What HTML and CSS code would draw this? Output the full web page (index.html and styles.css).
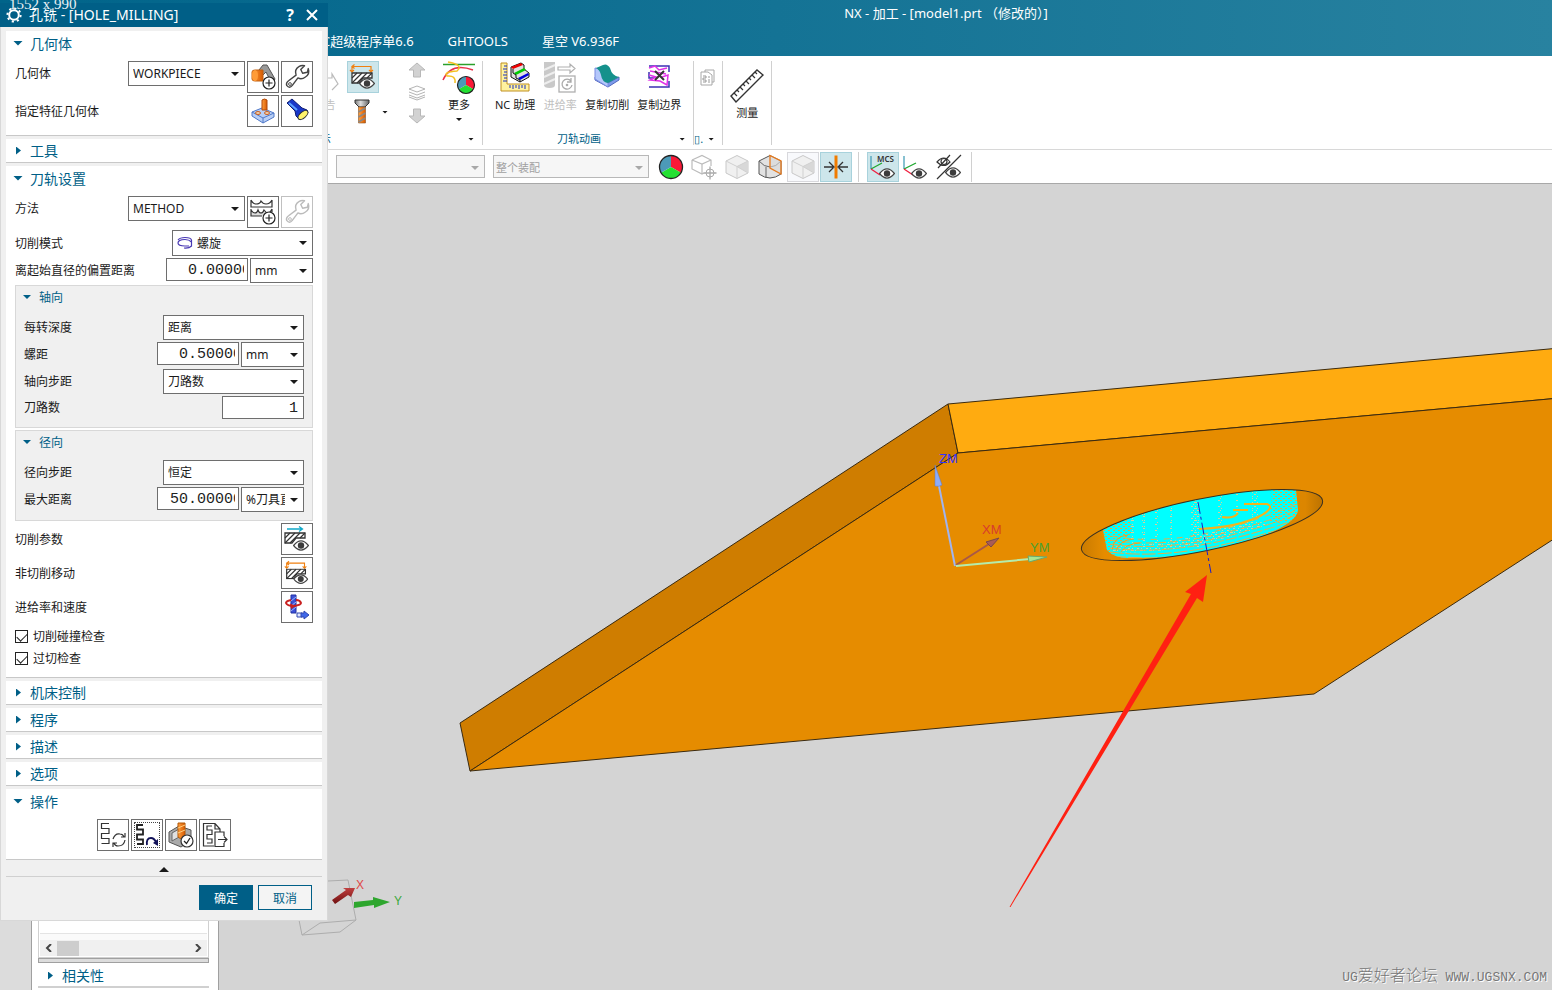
FILE: index.html
```html
<!DOCTYPE html>
<html lang="zh-CN">
<head>
<meta charset="UTF-8">
<title>NX - 加工</title>
<link rel="stylesheet" href="styles.css">
</head>
<body>

<!-- shared icon parts -->
<svg class="sprite" aria-hidden="true">
  <defs>
    <linearGradient id="steel" x1="0" x2="1"><stop offset="0" stop-color="#777"/><stop offset=".4" stop-color="#ddd"/><stop offset="1" stop-color="#666"/></linearGradient>
    <linearGradient id="orange" x1="0" x2="1"><stop offset="0" stop-color="#ffa040"/><stop offset="1" stop-color="#d85a00"/></linearGradient>
  </defs>
  <symbol id="eye" viewBox="0 0 16 11">
    <path d="M.6 5.500Q8-3.600 15.400 5.500Q8 14.600.6 5.500Z" fill="#fff" stroke="#444" stroke-width="1.200"/>
    <circle cx="8" cy="5.500" r="3.200" fill="#3c3c3c"/>
  </symbol>
  <symbol id="wrench" viewBox="0 0 32 32">
    <path d="M5 25Q4 22 7 20L15 14Q13 8 18 5Q21 3 24 4L20 8L22 12L27 11L28 7Q30 13 25 16Q21 19 17 17L11 25Q8 29 5 25Z" fill="none" stroke="currentColor" stroke-width="1.500" stroke-linejoin="round"/>
    <circle cx="8.500" cy="23.500" r="1.500" fill="none" stroke="currentColor"/>
  </symbol>
  <symbol id="plus" viewBox="0 0 14 14">
    <circle cx="7" cy="7" r="6" fill="#fff" stroke="#222" stroke-width="1.200"/>
    <path d="M3.500 7H10.500M7 3.500V10.500" stroke="#222" stroke-width="1.200"/>
  </symbol>
  <symbol id="cube" viewBox="0 0 26 26">
    <path d="M2 7L13 1.500L24 7V19L13 24.500L2 19Z" fill="#f0f0f0" stroke="#c8c8c8"/>
    <path d="M13 12.500L24 7V19L13 12.500Z" fill="#d8d8d8"/>
    <path d="M2 7L13 12.500L24 7M13 12.500V24.500M13 12.500L24 19" fill="none" stroke="#d0d0d0"/>
  </symbol>
  <symbol id="block" viewBox="0 0 22 12">
    <path d="M1 1H21V6H12L8 11H1Z" fill="#fff" stroke="#333" stroke-width="1.300"/>
    <path d="M1 6L6 1M1 11L11 1M6 11L16 1M16 6L21 1" stroke="#333" stroke-width="1.200"/>
  </symbol>
  <symbol id="noncut" viewBox="0 0 32 32">
    <path d="M5 11V5.500H24V11M7.500 3.500L5 5.500L7.500 7.500M3 9L5 11L7 9M22 9L24 11L26 9" fill="none" stroke="#f08010" stroke-width="1.200"/>
    <use href="#block" x="4" y="11" width="22" height="12"/>
    <use href="#eye" x="12" y="17" width="16" height="11"/>
  </symbol>
</svg>

<div class="app">
  <header class="app-header">
    <div class="app-title">NX - 加工 - [model1.prt （修改的）]</div>
    <nav class="tabs">
      <a href="#">C超级程序单6.6</a>
      <a href="#">GHTOOLS</a>
      <a href="#">星空 V6.936F</a>
    </nav>
  </header>

  <div class="ribbon">
    <section class="ribbon-group group-display">
      <div class="ribbon-items">
        <div class="report-tools">
          <button class="tool off report">
            <svg width="20" height="34" viewBox="0 0 20 34"><path d="M6 17H12V13L18 23L12 29" fill="none" stroke="#bbb" stroke-width="1.200"/></svg>
            <span>告</span>
          </button>
          <div class="stack">
            <button class="square active" aria-label="显示刀轨"><svg width="32" height="32"><use href="#noncut"/></svg></button>
            <div class="screw-row">
              <button class="square-plain" aria-label="刀具"><svg width="16" height="26" viewBox="0 0 16 26"><path d="M1 1H15V4L11 8H5L1 4Z" fill="url(#steel)" stroke="#333"/><path d="M4.500 8H11.500V24H4.500Z" fill="url(#orange)" stroke="#8a5020" stroke-width=".6"/><path d="M4.500 13L11.500 9M4.500 18L11.500 14M4.500 23L11.500 19" stroke="#888" stroke-width="1.500"/></svg></button>
              <i class="caret small"></i>
            </div>
          </div>
        </div>
        <div class="stack arrows">
          <svg width="18" height="16" viewBox="0 0 18 16"><path d="M9 1L17 8H12.500V15H5.500V8H1Z" fill="#d2d2d2" stroke="#b8b8b8"/></svg>
          <svg width="18" height="16" viewBox="0 0 18 16"><path d="M1 4L9 1L17 4L9 7ZM1 7L9 10L17 7M1 10L9 13L17 10M1 12L9 15L17 12" fill="none" stroke="#b4b4b4"/></svg>
          <svg width="18" height="16" viewBox="0 0 18 16"><path d="M9 15L17 8H12.500V1H5.500V8H1Z" fill="#d2d2d2" stroke="#b8b8b8"/></svg>
        </div>
        <button class="tool more">
          <svg width="34" height="34" viewBox="0 0 34 34"><path d="M1 3.500H33" stroke="#2ba02b" stroke-width="1.500"/><path d="M1 19Q9 1 31 9" fill="none" stroke="#e8304a" stroke-width="1.500"/><path d="M6 1Q22 4 15 10Q1 11 5 15Q14 14 13 22" fill="none" stroke="#f5c020" stroke-width="1.500"/><path d="M24 24V15.500A8.500 8.500 0 0 1 31.400 28.200Z" fill="#fa1837"/><path d="M24 24L31.400 28.200A8.500 8.500 0 0 1 16.600 28.200Z" fill="#23e032"/><path d="M24 24L16.600 28.200A8.500 8.500 0 0 1 24 15.500Z" fill="#4c9ab8"/><circle cx="24" cy="24" r="8.500" fill="none" stroke="#222" stroke-width="1.200"/></svg>
          <span>更多</span>
          <i class="caret small"></i>
        </button>
      </div>
      <div class="ribbon-label"><span>示</span><i class="caret small"></i></div>
    </section>

    <section class="ribbon-group group-path">
      <div class="ribbon-items">
        <button class="tool">
          <svg width="32" height="34" viewBox="0 0 32 34"><path d="M2 2H8V23H30V30H2Z" fill="#fff2a0" stroke="#c09020"/><path d="M5 5H8M4 8H8M5 11H8M4 14H8M5 17H8M4 20H8M11 24V27M14 24V28M17 24V27M20 24V28M23 24V27M26 24V28" stroke="#1a30c0"/><path d="M12 6L22 2L25 4V8L30 12V16L21 21L12 16Z" fill="#e0e0e0" stroke="#111"/><path d="M12 6L22 2L24 4L14 8Z" fill="#e00"/><path d="M15 12L25 7L27 9L17 14Z" fill="#0c0"/><path d="M19 17L29 12L30 14L21 19Z" fill="#00d"/><path d="M14 8V12L17 14V17L21 19V21" fill="none" stroke="#111"/></svg>
          <span>NC 助理</span>
        </button>
        <button class="tool off">
          <svg width="34" height="34" viewBox="0 0 34 34"><path d="M1 1H12V24Q12 27 6.500 27Q1 27 1 24Z" fill="#c9c9c9"/><path d="M1 9L12 4M1 16L12 11M1 23L12 18" stroke="#eee" stroke-width="2"/><path d="M15 6H27V3L32 7.500L27 12V9H15Z" fill="none" stroke="#b0b0b0" stroke-width="1.200"/><rect x="16" y="15" width="16" height="16" fill="none" stroke="#b0b0b0" stroke-width="1.300"/><path d="M28 20A5 5 0 1 0 29 24M28 17V21H24" fill="none" stroke="#aaa" stroke-width="1.300"/><circle cx="24" cy="24" r="1.300" fill="#aaa"/></svg>
          <span>进给率</span>
        </button>
        <button class="tool">
          <svg width="26" height="34" viewBox="0 0 26 34"><path d="M1 16L14 22L25 16V19L14 26L1 19Z" fill="#7c9bea" stroke="#5368c0"/><path d="M1 7Q6 7 8 14Q9 20 14 22V26L1 18Z" fill="#b4c7fb" stroke="#7a8ce0"/><path d="M9 4Q13 2 16 7Q18 15 25 16L14 22Q8 21 7 14Q6 9 2 7Z" fill="#15918c"/></svg>
          <span>复制切削</span>
        </button>
        <button class="tool">
          <svg width="26" height="34" viewBox="0 0 26 34"><path d="M3 5H23V11M3 11V17H8M3 26H23V20" fill="none" stroke="#3c30b4" stroke-width="1.500"/><path d="M3 7L9 5L13 9L21 7M4 10L20 13M3 14L10 16L4 19L14 20L21 24L22 14L16 16" fill="none" stroke="#e030e8" stroke-width="1.500"/><path d="M9 10L18 19M18 10L9 19" stroke="#333" stroke-width="2"/></svg>
          <span>复制边界</span>
        </button>
      </div>
      <div class="ribbon-label"><span>刀轨动画</span><i class="caret small"></i></div>
    </section>

    <section class="ribbon-group group-post">
      <div class="ribbon-items">
        <svg width="16" height="18" viewBox="0 0 16 18"><path d="M5 3V1H14V13H12M1 3H8L12 6V16H1Z" fill="#fff" stroke="#a8a8a8"/><path d="M3 7H6V9H3V11H6V13H3M8 8H10M8 11H10M8 13H10" fill="none" stroke="#999"/></svg>
      </div>
      <div class="ribbon-label"><span>▯.</span><i class="caret small"></i></div>
    </section>

    <section class="ribbon-group group-measure">
      <div class="ribbon-items">
        <button class="tool">
          <svg width="34" height="34" viewBox="0 0 34 34"><path d="M1 27L27 1L33 6L6 33Z" fill="#fff" stroke="#333" stroke-width="1.400"/><path d="M4 24L7 27M7 21L9 23M10 18L13 21M13 15L15 17M16 12L19 15M19 9L21 11M22 6L25 9M25 3L27 5" stroke="#333" stroke-width="1.200"/></svg>
          <span>测量</span>
        </button>
      </div>
    </section>
  </div>

  <div class="selection-bar">
    <div class="combo off filter"><select disabled aria-label="过滤器"><option></option></select></div>
    <div class="combo off assembly"><select disabled aria-label="选择范围"><option>整个装配</option></select></div>
    <div class="view-tools">
      <button class="view-tool" aria-label="颜色"><svg width="26" height="26" viewBox="0 0 26 26"><path d="M13 13V1.500A11.500 11.500 0 0 1 23 18.700Z" fill="#fa1837"/><path d="M13 13L23 18.700A11.500 11.500 0 0 1 3 18.700Z" fill="#23e032"/><path d="M13 13L3 18.700A11.500 11.500 0 0 1 13 1.500Z" fill="#4c9ab8"/><circle cx="13" cy="13" r="11.500" fill="none" stroke="#222" stroke-width="1.300"/></svg></button>
      <button class="view-tool" aria-label="定向"><svg width="26" height="26" viewBox="0 0 26 26"><path d="M1 6L11 1.500L20 6V12M1 6V15L11 20L13 19M1 6L11 10L20 6M11 10V20" fill="none" stroke="#bbb" stroke-width="1.200"/><circle cx="19" cy="19" r="4" fill="#fff" stroke="#aaa"/><path d="M12.500 19H25.500M19 12.500V25.500" stroke="#aaa" stroke-width="1.300"/></svg></button>
      <button class="view-tool" aria-label="着色"><svg width="26" height="26"><use href="#cube"/></svg></button>
      <button class="view-tool" aria-label="剖切"><svg width="26" height="26" viewBox="0 0 26 26"><path d="M2 7L13 1.500L24 7V20Q13 28 2 20Z" fill="#e2e2e2" stroke="#555"/><path d="M2 7Q7 13 13 13Q19 13 24 7M9 13V24" fill="none" stroke="#666"/><path d="M13 1.500L24 7V20L13 14Z" fill="#d8d8d8" fill-opacity=".6" stroke="#e87a1c" stroke-width="1.300"/></svg></button>
      <button class="view-tool boxed" aria-label="透视"><svg width="26" height="26"><use href="#cube"/></svg></button>
      <button class="view-tool active" aria-label="对齐"><svg width="26" height="26" viewBox="0 0 26 26"><path d="M13 1.500V24.500" stroke="#f07c00" stroke-width="3"/><path d="M1 13H10M6 8L11 13L6 18M25 13H16M20 8L15 13L20 18" fill="none" stroke="#333" stroke-width="1.300"/></svg></button>
    </div>
    <div class="view-tools coords">
      <button class="view-tool active" aria-label="显示 MCS"><svg width="28" height="28" viewBox="0 0 28 28"><path d="M2 3V16" stroke="#48a0b8" stroke-width="1.300"/><path d="M2 16L13 10" stroke="#20a830" stroke-width="1.300"/><path d="M2 16L11 22" stroke="#f02040" stroke-width="1.300"/><text x="8" y="9" class="mcs">MCS</text><use href="#eye" x="10" y="15" width="16" height="11"/></svg></button>
      <button class="view-tool" aria-label="显示 WCS"><svg width="28" height="28" viewBox="0 0 28 28"><path d="M2 3V16" stroke="#48a0b8" stroke-width="1.300"/><path d="M2 16L14 10" stroke="#20a830" stroke-width="1.300"/><path d="M2 16L11 22" stroke="#f02040" stroke-width="1.300"/><use href="#eye" x="9" y="15" width="16" height="11"/></svg></button>
      <button class="view-tool" aria-label="显示和隐藏"><svg width="28" height="28" viewBox="0 0 28 28"><path d="M2 9Q9 1 15 9Q9 16 2 9Z" fill="none" stroke="#333" stroke-width="1.200"/><circle cx="9" cy="8.500" r="3" fill="none" stroke="#333" stroke-width="1.200"/><path d="M3 15L15 2M2 26L26 2" stroke="#333" stroke-width="1.200"/><use href="#eye" x="10" y="14" width="16" height="11"/></svg></button>
    </div>
  </div>

  <main class="workspace">
    <aside class="navigator">
      <div class="nav-pane">
        <div class="nav-list">
          <div class="nav-scroll">
            <button aria-label="向左"><svg width="7" height="8" viewBox="0 0 7 8"><path d="M6 0L2 4L6 8" fill="none" stroke="#444" stroke-width="2"/></svg></button>
            <div class="thumb"></div>
            <button class="right" aria-label="向右"><svg width="7" height="8" viewBox="0 0 7 8"><path d="M1 0L5 4L1 8" fill="none" stroke="#444" stroke-width="2"/></svg></button>
          </div>
        </div>
        <div class="splitter"></div>
        <button class="panel-head">相关性</button>
      </div>
    </aside>

    <div class="viewport">
      <svg class="scene" viewBox="219 184 1333 806" preserveAspectRatio="xMidYMid slice">
        <defs>
          <clipPath id="hole"><ellipse cx="1202" cy="525" rx="123" ry="26" transform="rotate(-11.600 1202 525)"/></clipPath>
          <clipPath id="path-area"><path d="M1103 480V530L1107 550Q1114 558 1128 558Q1210 559 1270 533Q1297 521 1298 510L1295 480Z"/></clipPath>
          <linearGradient id="wall" x1="0" x2="1"><stop offset="0" stop-color="#c87a00"/><stop offset=".1" stop-color="#e68c00"/><stop offset=".92" stop-color="#dc8600"/><stop offset="1" stop-color="#b87000"/></linearGradient>
          <linearGradient id="red-axis" x1="0" y1="0" x2="0" y2="1"><stop offset="0" stop-color="#c04040"/><stop offset="1" stop-color="#701010"/></linearGradient>
          <pattern id="specks" width="9" height="6" patternUnits="userSpaceOnUse"><path d="M0 .5H2M5 .5H6M3 2.500H5M7 2.500H8M1 4.500H2M6 4.500H9" stroke="#d8cf98" stroke-width="1"/></pattern>
          <pattern id="grain" width="5" height="4" patternUnits="userSpaceOnUse"><path d="M0 .5H2M3 2.500H5" stroke="#e8a838" stroke-width="1"/></pattern>
        </defs>

        <!-- plate -->
        <g stroke="#3a2a10" stroke-width="1" stroke-linejoin="round">
          <path d="M948 404L958 453L470 771L460 723Z" fill="#cf7d00"/>
          <path d="M948 404L1560 348V398L958 453Z" fill="#ffab10"/>
          <path d="M958 453L1560 398V535L1314 694L470 771Z" fill="#e68c00"/>
        </g>

        <!-- hole with tool path -->
        <g clip-path="url(#hole)">
          <rect x="1080" y="485" width="245" height="80" fill="url(#wall)"/>
          <g clip-path="url(#path-area)">
            <rect x="1100" y="485" width="200" height="80" fill="#00ffff"/>
            <path d="M1103 526L1128 516L1134 532L1112 558H1103ZM1272 485H1300V520L1270 524Z" fill="url(#grain)"/>
            <path d="M1131 512H1134V545H1131ZM1142 512H1145V548H1142ZM1155 507H1158V547H1155ZM1170 504H1173V547H1170ZM1191 498H1199V548H1191ZM1218 492H1222V530H1218ZM1235 490H1238V515H1235ZM1252 488H1258V520H1252ZM1110 546Q1170 548 1250 520L1270 524Q1180 556 1112 552Z" fill="url(#specks)"/>
            <g fill="none" stroke="#e6ae48" stroke-width="1">
              <path d="M1112 536Q1170 547 1245 523T1296 496" stroke-dasharray="6 7"/>
              <path d="M1110 540Q1170 550 1250 526T1298 500" stroke-dasharray="8 4"/>
              <path d="M1110 544Q1170 553 1250 530T1298 504" stroke-dasharray="9 3"/>
              <path d="M1110 548Q1170 556 1250 534T1298 508" stroke-dasharray="11 2"/>
              <path d="M1110 552Q1170 560 1250 538T1298 512" stroke-dasharray="14 2"/>
              <path d="M1112 556Q1180 563 1250 542T1298 516" stroke-dasharray="14 2"/>
              <path d="M1112 550Q1114 536 1128 535M1116 551Q1119 540 1134 539M1121 552Q1125 544 1140 543" stroke="#f0a020"/>
            </g>
            <g fill="none" stroke="#f2b41c" stroke-width="2">
              <path d="M1199 529Q1240 527 1262 515Q1275 507 1267 504H1244M1222 517Q1234 519 1238 513M1233 510H1248"/>
            </g>
          </g>
        </g>
        <ellipse cx="1202" cy="525" rx="123" ry="26" transform="rotate(-11.600 1202 525)" fill="none" stroke="#3a3020"/>
        <path d="M1198 502L1211 573" stroke="#1c1cc8" stroke-width="1" stroke-dasharray="12 3 3 3"/>

        <!-- machine coordinate system -->
        <path d="M955 566L939 486" stroke="#a0b4f0" stroke-width="2"/>
        <path d="M935 465L942 485Q939 487 935 486Z" fill="#8cacf8" stroke="#6078c0" stroke-width=".5"/>
        <path d="M956 565L989 544" stroke="#a85848" stroke-width="2"/>
        <path d="M999 538L991 547L986 542Z" fill="#a85c58" stroke="#7c4848"/>
        <path d="M956 566L1030 559" stroke="#b4ecac" stroke-width="2"/>
        <path d="M1047 557L1029 562L1028 556Z" fill="#a8e490" stroke="#68a870"/>
        <g class="axis-text">
          <text x="939" y="463" fill="#3232ff">ZM</text>
          <text x="982" y="534" fill="#d83c2c">XM</text>
          <text x="1030" y="552" fill="#4ca030">YM</text>
        </g>

        <!-- pointer to the tool path -->
        <path d="M1009.500 907L1191 594L1185 592L1207 575L1203 602L1197 598L1010.500 907Z" fill="#ff2012"/>

        <!-- view triad -->
        <path d="M298 915L302 935L340 932L356 920L348 880L328 881M302 935L320 923L356 920" fill="none" stroke="#adadad"/>
        <path d="M332 900L346 890L343 888L355 888L351 897L348 895L335 904Z" fill="url(#red-axis)"/>
        <path d="M354 902L373 900V897L390 902L374 908V905L354 908Z" fill="#2ea62e"/>
        <g class="triad-text">
          <text x="356" y="889" fill="#e04848">X</text>
          <text x="394" y="905" fill="#3ca83c">Y</text>
        </g>
      </svg>
      <div class="watermark">UG<b>爱好者论坛</b> WWW.UGSNX.COM</div>
    </div>
  </main>
</div>

<!-- operation dialog floats over the main window -->
<form class="dialog">
  <div class="dialog-title">
    <svg width="16" height="16" viewBox="0 0 16 16"><circle cx="8" cy="8" r="4.800" fill="none" stroke="#fff" stroke-width="2"/><circle cx="8" cy="8" r="6.600" fill="none" stroke="#fff" stroke-width="2" stroke-dasharray="2.200 2.980"/></svg>
    <h1>孔铣 - [HOLE_MILLING]</h1>
    <button type="button" class="help" aria-label="帮助">?</button>
    <button type="button" aria-label="关闭"><svg width="12" height="12" viewBox="0 0 12 12"><path d="M1 1L11 11M11 1L1 11" stroke="#fff" stroke-width="2"/></svg></button>
  </div>

  <div class="dialog-body">
    <section class="panel">
      <button type="button" class="panel-head open">几何体</button>
      <div class="rows">
        <div class="row top">
          <label for="geometry">几何体</label>
          <div class="combo medium"><select id="geometry"><option>WORKPIECE</option></select></div>
          <button type="button" class="icon-btn" aria-label="新建几何体"><svg width="30" height="30" viewBox="0 0 30 30"><path d="M11 8L15 3H19L27 17L24 22L18 10L14 14Z" fill="#999" stroke="#555"/><path d="M4 10Q4 8 7 8H15V19H7Q4 19 4 17Z" fill="url(#orange)" stroke="#c06010"/><ellipse cx="7" cy="13.500" rx="3" ry="5.500" fill="#ff9c38"/><use href="#plus" x="14" y="14" width="14" height="14"/></svg></button>
          <button type="button" class="icon-btn" aria-label="编辑几何体"><svg width="30" height="30"><use href="#wrench"/></svg></button>
        </div>
        <div class="row">
          <label for="feature">指定特征几何体</label>
          <button type="button" id="feature" class="icon-btn" aria-label="指定特征几何体"><svg width="30" height="30" viewBox="0 0 30 30"><path d="M4 16L14 12L26 17V21L15 27L4 20Z" fill="#b8cff6" stroke="#5078c8"/><path d="M4 16L15 22L26 17M15 22V27" fill="none" stroke="#5078c8"/><ellipse cx="10" cy="17" rx="2.500" ry="1.500" fill="#f0d0b0" stroke="#c86020"/><ellipse cx="19" cy="17" rx="2.500" ry="1.500" fill="#f0d0b0" stroke="#c86020"/><path d="M14 4Q16.500 2 19 4V14H14Z" fill="url(#orange)" stroke="#b04808"/></svg></button>
          <button type="button" class="icon-btn" aria-label="显示"><svg width="30" height="30" viewBox="0 0 30 30"><path d="M5 7L10 3L20 12L25 14L26 17L18 24L14 20L13 15Z" fill="#1836c8" stroke="#101c70"/><path d="M7 7L15 14" stroke="#5ca0ff" stroke-width="2"/><ellipse cx="21" cy="19" rx="6" ry="3" fill="#fff36b" stroke="#303030" transform="rotate(-40 21 19)"/></svg></button>
        </div>
      </div>
    </section>

    <section class="panel"><button type="button" class="panel-head">工具</button></section>

    <section class="panel">
      <button type="button" class="panel-head open">刀轨设置</button>
      <div class="rows">
        <div class="row top">
          <label for="method">方法</label>
          <div class="combo medium"><select id="method"><option>METHOD</option></select></div>
          <button type="button" class="icon-btn" aria-label="新建方法"><svg width="30" height="30" viewBox="0 0 30 30"><path d="M3 15H25V19H3Z" fill="#ddd"/><path d="M3 3V10H24V3M3 3Q5 7 8 7Q12 7 13 4Q15 7 18 7Q22 7 24 3M3 12V19H14M24 12V15M3 13Q5 16 7 16Q9 16 10 13Q11 16 13 16Q15 16 16 13Q18 16 20 16Q22 16 24 12" fill="none" stroke="#333" stroke-width="1.200"/><use href="#plus" x="14" y="14" width="14" height="14"/></svg></button>
          <button type="button" class="icon-btn off" disabled aria-label="编辑方法"><svg width="30" height="30"><use href="#wrench"/></svg></button>
        </div>
        <div class="row">
          <label for="pattern">切削模式</label>
          <div class="combo wide with-icon">
            <svg width="16" height="14" viewBox="0 0 16 14"><path d="M1 4Q3 1.500 8 1.500Q14 1.500 14.500 4V10Q12 12.500 7 12M14.500 6Q12 3.500 8 3.500Q1 3.500 1 7Q1 10 8 10H12" fill="none" stroke="#4838b4" stroke-width="1.200"/></svg>
            <select id="pattern"><option>螺旋</option></select>
          </div>
        </div>
        <div class="row top">
          <label for="offset">离起始直径的偏置距离</label>
          <input class="number one-digit" id="offset" value="0.00000">
          <div class="combo unit"><select aria-label="单位"><option>mm</option></select></div>
        </div>

        <div class="group">
          <button type="button" class="group-head">轴向</button>
          <div class="rows">
            <div class="row">
              <label for="depth">每转深度</label>
              <div class="combo wide"><select id="depth"><option>距离</option></select></div>
            </div>
            <div class="row top">
              <label for="pitch">螺距</label>
              <input class="number one-digit" id="pitch" value="0.50000">
              <div class="combo unit"><select aria-label="单位"><option>mm</option></select></div>
            </div>
            <div class="row">
              <label for="axial">轴向步距</label>
              <div class="combo wide"><select id="axial"><option>刀路数</option></select></div>
            </div>
            <div class="row short">
              <label for="passes">刀路数</label>
              <input class="number count" id="passes" value="1">
            </div>
          </div>
        </div>

        <div class="group">
          <button type="button" class="group-head">径向</button>
          <div class="rows">
            <div class="row">
              <label for="radial">径向步距</label>
              <div class="combo wide"><select id="radial"><option>恒定</option></select></div>
            </div>
            <div class="row top">
              <label for="max">最大距离</label>
              <input class="number two-digit" id="max" value="50.00000">
              <div class="combo unit"><select aria-label="单位"><option>%刀具直径</option></select></div>
            </div>
          </div>
        </div>

        <div class="row">
          <label for="cutting">切削参数</label>
          <button type="button" id="cutting" class="icon-btn" aria-label="切削参数"><svg width="30" height="30" viewBox="0 0 30 30"><path d="M5 5H20M17 2.500L20.500 5L17 7.500" fill="none" stroke="#10a8c8" stroke-width="1.300"/><use href="#block" x="2" y="8" width="22" height="12"/><use href="#eye" x="11" y="16" width="16" height="11"/></svg></button>
        </div>
        <div class="row">
          <label for="noncutting">非切削移动</label>
          <button type="button" id="noncutting" class="icon-btn" aria-label="非切削移动"><svg width="30" height="30"><use href="#noncut"/></svg></button>
        </div>
        <div class="row">
          <label for="feeds">进给率和速度</label>
          <button type="button" id="feeds" class="icon-btn" aria-label="进给率和速度"><svg width="30" height="30" viewBox="0 0 30 30"><path d="M9 3H14V21H9Z" fill="#3c50d8" stroke="#2030a0"/><path d="M9 9L14 5M9 14L14 10M9 19L14 15" stroke="#a0b4f8"/><path d="M9 8Q4 9 4 11Q5 14 12 14Q19 13 19 11Q18 8 14 8" fill="none" stroke="#c82020" stroke-width="2"/><path d="M8 11.500L14 14L9 17Z" fill="#c82020"/><path d="M15 21H20V25H15Z" fill="#dfe6ff" stroke="#3048b0"/><path d="M19 21H22V19L27 23L22 27V25H19Z" fill="#4068e8" stroke="#3048b0"/></svg></button>
        </div>
        <div class="checks">
          <label><input type="checkbox" checked>切削碰撞检查</label>
          <label><input type="checkbox" checked>过切检查</label>
        </div>
      </div>
    </section>

    <section class="panel"><button type="button" class="panel-head">机床控制</button></section>
    <section class="panel"><button type="button" class="panel-head">程序</button></section>
    <section class="panel"><button type="button" class="panel-head">描述</button></section>
    <section class="panel"><button type="button" class="panel-head">选项</button></section>

    <section class="panel">
      <button type="button" class="panel-head open">操作</button>
      <div class="actions">
        <button type="button" class="icon-btn" aria-label="生成"><svg width="30" height="30" viewBox="0 0 30 30"><path d="M11 3.500H3.500V8.500H11V13.500H3.500V18.500H11V23.500H3.500" fill="none" stroke="#333" stroke-width="1.200"/><path d="M15 19Q17 13 22 14Q25 14 26 17M27 13V17H23M27 20Q26 26 20 26Q17 26 16 23M15 27V23H19" fill="none" stroke="#333" stroke-width="1.200"/></svg></button>
        <button type="button" class="icon-btn focus" aria-label="重播"><svg width="30" height="30" viewBox="0 0 30 30"><path d="M11 5H5V9.500H11V14.500H5V19.500H11V24H5" fill="none" stroke="#222" stroke-width="1.800"/><path d="M15 25Q14 18 19 18Q22 18 24 22" fill="none" stroke="#101058" stroke-width="1.800"/><path d="M21 23L26 19V26Z" fill="#101058"/></svg></button>
        <button type="button" class="icon-btn" aria-label="确认"><svg width="30" height="30" viewBox="0 0 30 30"><path d="M3 12L13 6L25 10V20L15 27L3 22Z" fill="#aaa" stroke="#555"/><path d="M6 13L13 9V17L6 21Z" fill="#e0e0e0" stroke="#666"/><path d="M12 3H19V17L15 19L12 17Z" fill="url(#orange)" stroke="#b05808"/><path d="M12 8L19 5M12 13L19 10" stroke="#ffd080"/><circle cx="21" cy="21" r="6" fill="#fff" stroke="#333" stroke-width="1.200"/><path d="M18 21L20.500 23.500L24 18" fill="none" stroke="#222" stroke-width="1.300"/></svg></button>
        <button type="button" class="icon-btn" aria-label="列表"><svg width="30" height="30" viewBox="0 0 30 30"><path d="M14 26H3.500V3.500H15L20 9V12M15 3.500V9H20M24 16V12H15V26.500H24V23" fill="none" stroke="#333" stroke-width="1.200"/><path d="M12 6H7V10H12V14.500H7V19H12V23H7M18 19.500H27M24 16.500L27 19.500L24 22.500" fill="none" stroke="#333" stroke-width="1.200"/></svg></button>
      </div>
    </section>
    <button type="button" class="collapse" aria-label="收起"><i class="caret up"></i></button>
    <div class="dialog-footer">
      <button type="button" class="btn primary">确定</button>
      <button type="button" class="btn">取消</button>
    </div>
  </div>
</form>
<div class="size-tip">1552 x 990</div>

</body>
</html>
```
FILE: styles.css
```css
* {
  box-sizing: border-box;
}
body {
  margin: 0;
  font-family: "Noto Sans", "Noto Sans CJK SC", sans-serif;
  font-size: 12px;
  color: #1a1a1a;
}
button, input, select {
  font: inherit;
  color: inherit;
  margin: 0;
}
button {
  padding: 0;
  border: none;
  background: none;
}
svg {
  display: block;
  flex: none;
}
.sprite {
  position: absolute;
  width: 0;
  height: 0;
}
.app {
  display: flex;
  flex-direction: column;
  height: 100vh;
  overflow: hidden;
}

/* Header */
.app-header {
  flex: none;
  padding-left: 322px;
  color: #fff;
  background: linear-gradient(to right, #00648a, #2882a0);
}
.app-title {
  padding-left: 18px;
  font-size: 13px;
  line-height: 26px;
  text-align: center;
}
.tabs {
  display: flex;
  gap: 34px;
  font-size: 13px;
  line-height: 30px;
}
.tabs a {
  color: #fff;
  text-decoration: none;
}

/* Ribbon */
.ribbon {
  flex: none;
  display: flex;
  height: 94px;
  padding: 5px 0 4px 320px;
  background: #fff;
  border-bottom: 1px solid #d8d8d8;
  font-size: 11px;
}
.ribbon-group {
  display: flex;
  flex-direction: column;
  justify-content: space-between;
  border-right: 1px solid #d0d0d0;
}
.ribbon-items {
  display: flex;
  gap: 8px;
}
.ribbon-label {
  display: flex;
  align-items: center;
  justify-content: center;
  position: relative;
  height: 12px;
  line-height: 12px;
  color: #005f87;
}
.ribbon-label .caret {
  position: absolute;
  right: 8px;
}
.group-display .ribbon-items {
  gap: 16px;
  padding-right: 6px;
}
.group-display .ribbon-label {
  justify-content: flex-start;
}
.group-path .ribbon-items {
  padding: 0 12px;
}
.group-path .ribbon-label {
  padding-right: 18px;
}
.group-post .ribbon-items {
  padding: 8px 6px;
}
.group-post .ribbon-label {
  justify-content: flex-start;
}
.group-measure .ribbon-items {
  padding: 8px 7px;
}
.report-tools {
  display: flex;
  gap: 7px;
  padding-right: 4px;
}
.report {
  width: 20px;
}
.stack {
  display: flex;
  flex-direction: column;
  gap: 6px;
}
.stack.arrows {
  gap: 7px;
  padding-top: 1px;
}
.screw-row {
  display: flex;
  align-items: center;
  gap: 12px;
  padding-left: 7px;
}
.tool {
  display: flex;
  flex-direction: column;
  align-items: center;
  line-height: 20px;
  white-space: nowrap;
}
.off {
  color: #c0c0c0;
}
.caret {
  width: 8px;
  height: 4px;
  background: #1a1a1a;
  clip-path: polygon(0 0, 100% 0, 50% 100%);
}
.caret.small {
  width: 6px;
  height: 3px;
}
.caret.up {
  width: 10px;
  height: 5px;
  clip-path: polygon(50% 0, 100% 100%, 0 100%);
}
.tool .caret {
  margin-top: 3px;
}
.square, .view-tool {
  display: flex;
  align-items: center;
  justify-content: center;
  width: 32px;
  height: 32px;
}
.square.active, .view-tool.active {
  background: #cde6eb;
  border: 1px solid #a8d2dc;
}

/* Selection bar */
.selection-bar {
  flex: none;
  display: flex;
  align-items: center;
  height: 34px;
  padding-left: 336px;
  background: #fff;
  border-bottom: 1px solid #a8a8a8;
}
.view-tools {
  display: flex;
  gap: 1px;
  padding: 0 6px;
  border-right: 1px solid #d0d0d0;
}
.view-tool {
  height: 30px;
}
.view-tool.boxed {
  background: #f8f9fc;
  border: 1px solid #d8d8dc;
}
.coords {
  padding-left: 8px;
}
.mcs {
  font-size: 8px;
  font-weight: 600;
  fill: #333;
}
.filter {
  width: 149px;
  margin-right: 8px;
}
.assembly {
  width: 156px;
}

/* Combo boxes and number fields */
.combo {
  position: relative;
  flex: none;
  height: 25px;
}
.combo select {
  appearance: none;
  display: block;
  width: 100%;
  height: 100%;
  padding: 0 18px 0 4px;
  border: 1px solid #6e6e6e;
  border-radius: 0;
  background: #fff;
  line-height: 23px;
}
.combo::after {
  content: "";
  position: absolute;
  right: 6px;
  top: 11px;
  width: 8px;
  height: 4px;
  background: #1a1a1a;
  clip-path: polygon(0 0, 100% 0, 50% 100%);
}
.combo.off {
  height: 23px;
  font-size: 11px;
}
.combo.off select {
  padding-left: 2px;
  border-color: #b8b8b8;
  background: #f6f6f6;
  color: #a0a0a0;
  opacity: 1;
}
.combo.off::after {
  background: #a8a8a8;
}
.medium {
  width: 117px;
}
.wide {
  width: 141px;
}
.unit {
  width: 63px;
}
.combo.with-icon {
  height: 26px;
}
.with-icon select {
  padding-left: 24px;
}
.with-icon svg {
  position: absolute;
  left: 5px;
  top: 6px;
}
.number {
  width: 82px;
  height: 23px;
  padding: 1px 3px 0;
  border: 1px solid #6e6e6e;
  font-family: "Liberation Mono", monospace;
  font-size: 15px;
  color: #222;
}
.one-digit {
  padding-left: 21px;
}
.two-digit {
  padding-left: 12px;
}
.count {
  text-align: right;
  padding-right: 5px;
}

/* Workspace */
.workspace {
  flex: 1;
  display: flex;
  min-height: 0;
  background: #d4d4d4;
}
.navigator {
  flex: none;
  display: flex;
  align-items: flex-end;
  width: 219px;
  padding-left: 31px;
  background: #dcdcdc;
}
.nav-pane {
  flex: 1;
  padding: 0 9px 2px 6px;
  background: #fff;
  border: solid #a0a0a0;
  border-width: 0 1px;
}
.nav-list {
  height: 100px;
  display: flex;
  flex-direction: column;
  justify-content: flex-end;
  padding: 0 1px 1px;
  border: 1px solid #d0d0d0;
}
.nav-scroll {
  display: flex;
  align-items: center;
  height: 23px;
  border-top: 1px solid #e4e4e4;
  padding: 0 5px;
  background: linear-gradient(#fafafa 6px, #f0f0f0 6px);
}
.nav-scroll button {
  padding-top: 5px;
}
.nav-scroll .right {
  margin-left: auto;
}
.thumb {
  width: 22px;
  height: 15px;
  margin: 6px 0 0 5px;
  background: #cdcdcd;
}
.splitter {
  height: 5px;
  background: #dcdcdc;
  border: 1px solid #a0a0a0;
}
.nav-pane .panel-head {
  height: 25px;
  padding-top: 2px;
  border-bottom: 2px solid #d0d0d0;
}
.viewport {
  flex: 1;
  position: relative;
  min-width: 0;
}
.scene {
  width: 100%;
  height: 100%;
}
.axis-text {
  font-family: "Liberation Sans", Arial, sans-serif;
  font-size: 13px;
}
.triad-text {
  font-family: "Liberation Sans", Arial, sans-serif;
  font-size: 12px;
}
.watermark {
  position: absolute;
  right: 5px;
  bottom: 1px;
  font-family: "Liberation Mono", "Noto Sans CJK SC", monospace;
  font-size: 13px;
  line-height: 22px;
  color: #777;
  text-shadow: 1px 1px 0 #fff;
}
.watermark b {
  font-size: 16px;
  font-weight: 300;
}

/* Dialog */
.dialog {
  position: absolute;
  left: 0;
  top: 3px;
  width: 328px;
}
.dialog-title {
  display: flex;
  align-items: center;
  height: 24px;
  padding: 0 10px 0 6px;
  background: #005f87;
  color: #fff;
}
.dialog-title h1 {
  flex: 1;
  margin: 0 0 0 7px;
  font-size: 14px;
  font-weight: 400;
  line-height: 24px;
}
.dialog-title .help {
  margin-right: 12px;
  font-size: 16px;
  font-weight: 700;
}
.dialog-body {
  padding: 4px 5px 0;
  background: #f0f0f0;
  border: solid #d8d8d8;
  border-width: 0 1px 1px;
}
.panel {
  margin-bottom: 3px;
  background: #fff;
  border-bottom: 1px solid #c8c8c8;
}
.panel-head, .group-head {
  display: flex;
  align-items: center;
  gap: 9px;
  width: 100%;
  height: 23px;
  padding-left: 10px;
  color: #005f87;
  font-size: 14px;
  line-height: 23px;
}
.panel-head::before {
  content: "";
  width: 5px;
  height: 8px;
  background: #005f87;
  clip-path: polygon(0 0, 100% 50%, 0 100%);
}
.panel-head.open {
  gap: 7px;
  height: 24px;
  margin-bottom: 6px;
  padding-left: 7px;
}
.panel-head.open::before, .group-head::before {
  content: "";
  width: 10px;
  height: 5px;
  background: #005f87;
  clip-path: polygon(0 0, 100% 0, 50% 100%);
}
.group-head {
  gap: 8px;
  height: 22px;
  margin-bottom: 7px;
  padding-left: 7px;
  font-size: 12px;
}
.group-head::before {
  width: 8px;
  height: 4px;
}
.rows {
  display: flex;
  flex-direction: column;
  gap: 2px;
}
.panel > .rows {
  padding: 0 9px 8px;
}
.row {
  display: flex;
  align-items: center;
  gap: 2px;
}
.row.top {
  align-items: flex-start;
}
.row label {
  flex: 1;
  line-height: 25px;
  white-space: nowrap;
}
.row.short label {
  line-height: 23px;
}
.group {
  border: 1px solid #d8d8d8;
  background: #f0f0f0;
}
.group .rows {
  padding: 0 8px 8px;
}
.icon-btn {
  flex: none;
  display: flex;
  align-items: center;
  justify-content: center;
  width: 32px;
  height: 32px;
  border: 1px solid #6e6e6e;
  background: #fff;
  color: #444;
}
.icon-btn.off {
  border-color: #c0c0c0;
  color: #bbb;
}
.icon-btn.focus {
  outline: 1px dotted #444;
  outline-offset: -4px;
}
.checks label {
  display: flex;
  align-items: center;
  gap: 5px;
  height: 22px;
}
.checks input {
  appearance: none;
  width: 13px;
  height: 13px;
  border: 1px solid #222;
  background: #fff;
}
.checks input:checked::before {
  content: "";
  display: block;
  width: 9px;
  height: 5px;
  margin: 2px 0 0 1px;
  border: solid #222;
  border-width: 0 0 1px 1px;
  transform: rotate(-45deg);
}
.actions {
  display: flex;
  justify-content: center;
  gap: 2px;
  padding-bottom: 8px;
}
.collapse {
  display: flex;
  align-items: center;
  justify-content: center;
  width: 100%;
  height: 14px;
  border-bottom: 1px solid #d0d0d0;
}
.dialog-footer {
  display: flex;
  justify-content: flex-end;
  gap: 5px;
  padding: 8px 10px 10px;
}
.btn {
  width: 54px;
  height: 25px;
  border: 1px solid #005f87;
  background: #f4f4f4;
  color: #005f87;
}
.btn.primary {
  background: #005f87;
  color: #fff;
}
.size-tip {
  position: absolute;
  left: 9px;
  top: -4px;
  font-family: "Liberation Serif", serif;
  font-size: 15px;
  line-height: 16px;
  color: #e8f0f4;
}
```
